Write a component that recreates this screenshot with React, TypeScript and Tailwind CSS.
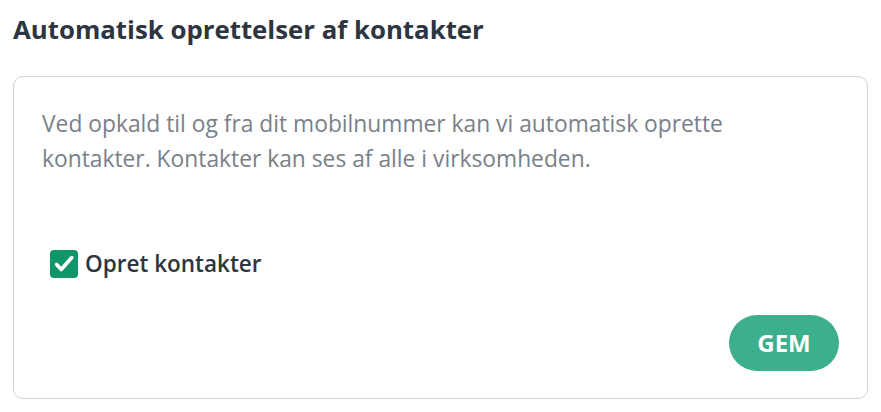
import React, { useState } from "react";

function App() {
    const [createContacts, setCreateContacts] = useState(true);

    return (
        <div className="min-h-screen bg-white px-[13px] pt-[12px] font-['Open_Sans',sans-serif]">
            <h2 className="text-[25.8px] font-bold leading-[34px] text-[#2d3540]">
                Automatisk oprettelser af kontakter
            </h2>
            <div className="mt-[30px] h-[323px] rounded-[10px] border border-[#c9d6df] px-[28px] pt-[29px] flex flex-col">
                <p className="max-w-[720px] text-[22.8px] leading-[35px] text-[#7a8089]">
                    Ved opkald til og fra dit mobilnummer kan vi automatisk oprette kontakter. Kontakter kan ses af alle i virksomheden.
                </p>
                <label className="mt-[71px] ml-[8px] flex items-center gap-[7px] cursor-pointer">
                    <button
                        type="button"
                        onClick={() => setCreateContacts(!createContacts)}
                        className={
                            createContacts
                                ? "w-[28px] h-[28px] rounded-[4px] bg-[#10966a] flex items-center justify-center"
                                : "w-[28px] h-[28px] rounded-[4px] border-2 border-[#9aa3ad] bg-white"
                        }
                    >
                        {createContacts && (
                            <svg width="22" height="22" viewBox="0 0 24 24" fill="none">
                                <path
                                    d="M4 12.5l5 5.5L20.5 5"
                                    stroke="white"
                                    strokeWidth="4"
                                    strokeLinecap="round"
                                    strokeLinejoin="round"
                                />
                            </svg>
                        )}
                    </button>
                    <span className="text-[22.5px] font-semibold text-[#2d3540]">Opret kontakter</span>
                </label>
                <div className="mt-auto mb-[27px] flex justify-end">
                    <button
                        type="button"
                        className="w-[110px] h-[56px] rounded-full bg-[#3caf8c] text-white text-[24px] font-bold"
                    >
                        GEM
                    </button>
                </div>
            </div>
        </div>
    );
}

export default App;
